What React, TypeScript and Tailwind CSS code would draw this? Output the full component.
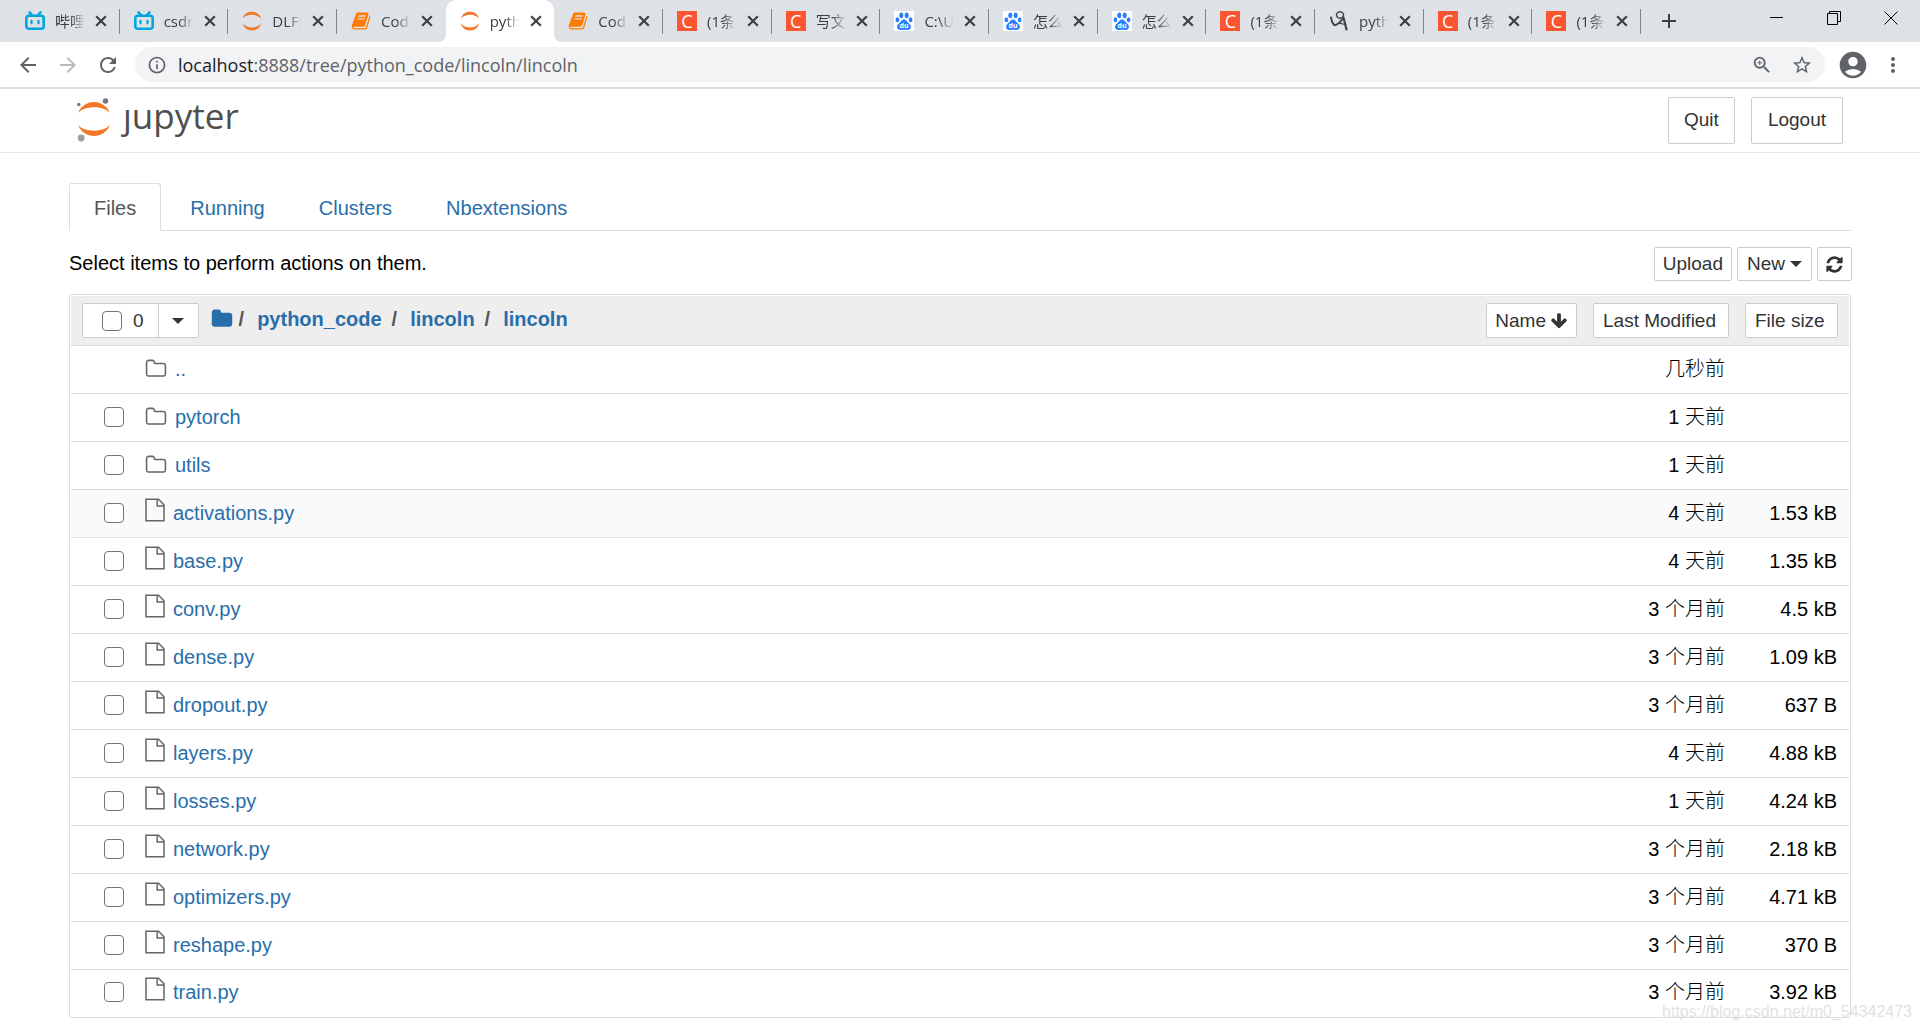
import type { ReactNode } from 'react';
import { clsx } from 'clsx';
import {
  MdAccountCircle,
  MdAdd,
  MdArrowBack,
  MdArrowForward,
  MdInfoOutline,
  MdMoreVert,
  MdRefresh,
  MdStarBorder,
  MdZoomIn,
} from 'react-icons/md';

type TabIcon = 'bili' | 'jupyter' | 'book' | 'csdn' | 'baidu' | 'scribble';

const browserTabs: { icon: TabIcon; title: string; active?: boolean }[] = [
  { icon: 'bili', title: '哔哩' },
  { icon: 'bili', title: 'csdn' },
  { icon: 'jupyter', title: 'DLFS' },
  { icon: 'book', title: 'Cod' },
  { icon: 'jupyter', title: 'pyth', active: true },
  { icon: 'book', title: 'Cod' },
  { icon: 'csdn', title: '(1条' },
  { icon: 'csdn', title: '写文' },
  { icon: 'baidu', title: 'C:\\U' },
  { icon: 'baidu', title: '怎么' },
  { icon: 'baidu', title: '怎么' },
  { icon: 'csdn', title: '(1条' },
  { icon: 'scribble', title: 'pyth' },
  { icon: 'csdn', title: '(1条' },
  { icon: 'csdn', title: '(1条' },
];

const entries: { name: string; kind: 'up' | 'folder' | 'file'; modified: string; size?: string; hovered?: boolean }[] = [
  { name: '..', kind: 'up', modified: '几秒前' },
  { name: 'pytorch', kind: 'folder', modified: '1 天前' },
  { name: 'utils', kind: 'folder', modified: '1 天前' },
  { name: 'activations.py', kind: 'file', modified: '4 天前', size: '1.53 kB', hovered: true },
  { name: 'base.py', kind: 'file', modified: '4 天前', size: '1.35 kB' },
  { name: 'conv.py', kind: 'file', modified: '3 个月前', size: '4.5 kB' },
  { name: 'dense.py', kind: 'file', modified: '3 个月前', size: '1.09 kB' },
  { name: 'dropout.py', kind: 'file', modified: '3 个月前', size: '637 B' },
  { name: 'layers.py', kind: 'file', modified: '4 天前', size: '4.88 kB' },
  { name: 'losses.py', kind: 'file', modified: '1 天前', size: '4.24 kB' },
  { name: 'network.py', kind: 'file', modified: '3 个月前', size: '2.18 kB' },
  { name: 'optimizers.py', kind: 'file', modified: '3 个月前', size: '4.71 kB' },
  { name: 'reshape.py', kind: 'file', modified: '3 个月前', size: '370 B' },
  { name: 'train.py', kind: 'file', modified: '3 个月前', size: '3.92 kB' },
];

const glyphs = {
  folder:
    'M1728 608v704q0 92-66 158t-158 66h-1216q-92 0-158-66t-66-158v-960q0-92 66-158t158-66h320q92 0 158 66t66 158v32h672q92 0 158 66t66 158z',
  folderOpen:
    'M1600 1312v-704q0-40-28-68t-68-28h-704q-40 0-68-28t-28-68v-64q0-40-28-68t-68-28h-320q-40 0-68 28t-28 68v960q0 40 28 68t68 28h1216q40 0 68-28t28-68zm128-704v704q0 92-66 158t-158 66h-1216q-92 0-158-66t-66-158v-960q0-92 66-158t158-66h320q92 0 158 66t66 158v32h672q92 0 158 66t66 158z',
  refresh:
    'M1639 1056q0 5-1 7-64 268-268 434.5t-478 166.5q-146 0-282.5-55t-243.5-157l-129 129q-19 19-45 19t-45-19-19-45v-448q0-26 19-45t45-19h448q26 0 45 19t19 45-19 45l-137 137q71 66 161 102t187 36q134 0 250-65t186-179q11-17 53-117 8-23 30-23h192q13 0 22.5 9.5t9.5 22.5zm25-800v448q0 26-19 45t-45 19h-448q-26 0-45-19t-19-45 19-45l138-138q-148-137-349-137-134 0-250 65t-186 179q-11 17-53 117-8 23-30 23h-199q-13 0-22.5-9.5t-9.5-22.5v-7q65-268 270-434.5t480-166.5q146 0 284 55.5t245 156.5l130-129q19-19 45-19t45 19 19 45z',
  arrowDown:
    'M1675 832q0 53-37 90l-651 652q-39 37-91 37-53 0-90-37l-651-652q-38-36-38-90 0-53 38-91l74-75q39-37 91-37 53 0 90 37l294 294v-704q0-52 38-90t90-38h128q52 0 90 38t38 90v704l294-294q37-37 90-37 52 0 91 37l75 75q37 39 37 91z',
  book:
    'M1703 478q40 57 18 129l-275 906q-19 64-76.5 107.5t-122.5 43.5h-923q-77 0-148.5-53.5t-99.5-131.5q-24-67-2-127 0-4 3-27t4-37q1-8-3-21.5t-3-19.5q2-11 8-21t16.5-23.5 16.5-23.5q23-38 45-91.5t30-91.5q3-10 .5-30t-.5-28q3-11 17-28t17-23q21-36 42-92t25-90q1-9-2.5-32t.5-28q4-13 22-30.5t22-22.5q19-26 42.5-84.5t27.5-96.5q1-8-3-25.5t-2-26.5q2-8 9-18t18-23 17-21q8-12 16.5-30.5t15-35 16-36 19.5-32 26.5-23.5 36-11.5 47.5 5.5l-1 3q38-9 51-9h761q74 0 114 56t18 130l-274 906q-36 119-71.5 153.5t-128.5 34.5h-869q-27 0-38 15-11 16-1 43 24 70 144 70h923q29 0 56-15.5t35-41.5l300-987q7-22 5-57 38 15 59 43zm-1064 2q-4 13 2 22.5t20 9.5h608q13 0 25.5-9.5t16.5-22.5l21-64q4-13-2-22.5t-20-9.5h-608q-13 0-25.5 9.5t-16.5 22.5zm-83 256q-4 13 2 22.5t20 9.5h608q13 0 25.5-9.5t16.5-22.5l21-64q4-13-2-22.5t-20-9.5h-608q-13 0-25.5 9.5t-16.5 22.5z',
};

function Glyph({ name, className }: { name: keyof typeof glyphs; className?: string }) {
  return (
    <svg viewBox="0 0 1792 1792" fill="currentColor" className={clsx('shrink-0', className)} aria-hidden="true">
      <path d={glyphs[name]} />
    </svg>
  );
}

function FileIcon() {
  return (
    <svg viewBox="0 0 20 24" className="h-6 w-5 shrink-0" fill="none" stroke="#666" strokeWidth="1.5" aria-hidden="true">
      <path d="M1 1.2H13.5L19 6.8V22.8H1Z" />
      <path d="M12.2 1.2V8H19" />
    </svg>
  );
}

function Caret() {
  return (
    <svg viewBox="0 0 12 6" className="h-[6px] w-3 shrink-0" fill="currentColor" aria-hidden="true">
      <path d="M0 0h12L6 6z" />
    </svg>
  );
}

function Favicon({ icon }: { icon: TabIcon }) {
  switch (icon) {
    case 'bili':
      return (
        <svg viewBox="0 0 20 20" className="size-5 shrink-0" fill="none" stroke="#00a6e0" aria-hidden="true">
          <rect x="1.3" y="4.8" width="17.4" height="13" rx="2.5" strokeWidth="2.6" />
          <path d="M4.5 1.300l3 3.200M15.500 1.300l-3 3.200" strokeWidth="2.500" strokeLinecap="round" />
          <path d="M6.500 9.800v2.500M13.500 9.800v2.500" strokeWidth="2.200" strokeLinecap="round" />
        </svg>
      );
    case 'jupyter':
      return (
        <svg viewBox="0 0 20 20" className="size-5 shrink-0" fill="#f37726" aria-hidden="true">
          <path d="M.8 7.6C2 3.2 5.5.8 10 .8s8 2.4 9.2 6.800C16.800 5 13.800 3.800 10 3.800S3.200 5 .8 7.600z" />
          <path d="M.8 12.600c1.200 4.400 4.700 6.900 9.200 6.900s8-2.500 9.200-6.900c-2.400 2.600-5.400 3.900-9.200 3.900s-6.800-1.300-9.200-3.900z" />
        </svg>
      );
    case 'book':
      return <Glyph name="book" className="size-5 text-[#ff7b00]" />;
    case 'csdn':
      return (
        <span className="grid size-5 shrink-0 place-items-center bg-[#fc5531] text-[18px] leading-5 text-white">C</span>
      );
    case 'baidu':
      return (
        <svg viewBox="0 0 20 20" className="size-5 shrink-0" aria-hidden="true">
          <path fill="#fff" d="M0 0h20v20H0z" />
          <g fill="#2a7fff">
            <ellipse cx="7.3" cy="4.3" rx="2" ry="2.9" />
            <ellipse cx="12.7" cy="4.3" rx="2" ry="2.9" />
            <ellipse cx="3.4" cy="8.7" rx="1.9" ry="2.5" />
            <ellipse cx="16.6" cy="8.7" rx="1.9" ry="2.5" />
            <path d="M10 8.4c2.3 0 3 2 4.3 3.3 1.5 1.4 3 2.6 2.6 4.8-.4 2-2 2.7-4 2.4-2-.3-3.8-.3-5.800 0s-3.600-.400-4-2.400c-.400-2.200 1.100-3.400 2.600-4.800C7 10.400 7.700 8.400 10 8.400z" />
          </g>
          <text x="10" y="17" textAnchor="middle" fontSize="7" fontWeight="700" fill="#fff">
            du
          </text>
        </svg>
      );
    case 'scribble':
      return (
        <svg viewBox="0 0 20 20" className="size-5 shrink-0" fill="none" stroke="#444" strokeLinecap="round" aria-hidden="true">
          <ellipse cx="11" cy="4" rx="3.5" ry="3.2" strokeWidth="1.5" />
          <path d="M2 6.5c.5 3 1.5 6 3.5 7.800 2.500-.300 6-3.300 8.500-7" strokeWidth="1.900" />
          <path d="M9 12.500c2-.500 4 0 6.500 1" strokeWidth="1.200" />
          <path d="M14.500 6.500c1 4 2 8 3 12" strokeWidth="2.200" />
        </svg>
      );
  }
}

function BrowserTab({ icon, title, active, divider }: { icon: TabIcon; title: string; active?: boolean; divider: boolean }) {
  return (
    <div className={clsx('relative flex h-[42px] min-w-0 flex-1 items-center pl-[14px]', active && 'rounded-t-[10px] bg-white')}>
      {active ? (
        <>
          <span className="absolute bottom-0 -left-2 size-2 bg-[radial-gradient(circle_at_0_0,transparent_8px,white_8px)]" />
          <span className="absolute -right-2 bottom-0 size-2 bg-[radial-gradient(circle_at_100%_0,transparent_8px,white_8px)]" />
        </>
      ) : null}
      <Favicon icon={icon} />
      <span className="ml-[10px] w-[30px] overflow-hidden text-[15px] leading-6 whitespace-nowrap text-[#3c4043] [mask-image:linear-gradient(to_right,black_50%,transparent)]">
        {title}
      </span>
      <button type="button" aria-label="Close tab" className="ml-[10px] text-[#3c4043]">
        <svg viewBox="0 0 12 12" className="size-3" fill="none" stroke="currentColor" strokeWidth="2.2" aria-hidden="true">
          <path d="M1.2 1.2l9.6 9.6M10.8 1.2l-9.6 9.6" />
        </svg>
      </button>
      {divider ? <span className="absolute top-[9px] right-0 h-[25px] w-px bg-[#80868b]" /> : null}
    </div>
  );
}

function TabStrip() {
  return (
    <div className="flex h-[42px] bg-[#dee1e6] pl-[11px]">
      <div className="flex min-w-0 flex-1">
        {browserTabs.map((tab, index) => (
          <BrowserTab key={index} {...tab} divider={!tab.active && !browserTabs[index + 1]?.active} />
        ))}
      </div>
      <div className="flex w-[279px] items-center justify-between pr-[22px] pl-4">
        <button type="button" aria-label="New tab" className="text-[#3c4043]">
          <MdAdd className="size-6" />
        </button>
        <div className="flex items-center gap-[43px] pb-[6px] text-black">
          <button type="button" aria-label="Minimize">
            <svg viewBox="0 0 14 14" className="size-[14px]" fill="none" stroke="currentColor" aria-hidden="true">
              <path d="M0 6.5h13" />
            </svg>
          </button>
          <button type="button" aria-label="Restore">
            <svg viewBox="0 0 14 14" className="size-[14px]" fill="none" stroke="currentColor" aria-hidden="true">
              <path d="M.5 2.5h10v11H.5zM2.5 2.5v-2h11v10h-3" />
            </svg>
          </button>
          <button type="button" aria-label="Close window">
            <svg viewBox="0 0 14 14" className="size-[14px]" fill="none" stroke="currentColor" aria-hidden="true">
              <path d="M.5.5l13 13M13.5.5l-13 13" />
            </svg>
          </button>
        </div>
      </div>
    </div>
  );
}

function AddressBar() {
  return (
    <div className="flex h-[47px] items-center border-b-2 border-[#dadce0] pr-[15px] pl-4 text-[#5f6368]">
      <div className="flex w-[119px] gap-4">
        <button type="button" aria-label="Back">
          <MdArrowBack className="size-6" />
        </button>
        <button type="button" aria-label="Forward" className="text-[#babcbe]">
          <MdArrowForward className="size-6" />
        </button>
        <button type="button" aria-label="Reload">
          <MdRefresh className="size-6" />
        </button>
      </div>
      <div className="flex h-[35px] min-w-0 flex-1 items-center rounded-full bg-[#f1f3f4] px-3">
        <MdInfoOutline className="size-5 shrink-0" />
        <p className="ml-[11px] min-w-0 flex-1 truncate text-[18px] leading-6">
          <span className="text-[#202124]">localhost</span>:8888/tree/python_code/lincoln/lincoln
        </p>
        <button type="button" aria-label="Zoom">
          <MdZoomIn className="size-[22px]" />
        </button>
        <button type="button" aria-label="Bookmark this page" className="ml-[18px]">
          <MdStarBorder className="size-[22px]" />
        </button>
      </div>
      <button type="button" aria-label="Profile" className="ml-3">
        <MdAccountCircle className="size-8" />
      </button>
      <button type="button" aria-label="Menu" className="ml-3">
        <MdMoreVert className="size-6" />
      </button>
    </div>
  );
}

function JupyterLogo() {
  return (
    <a href="#tree" aria-label="jupyter" className="flex items-start gap-3">
      <svg viewBox="0 0 34 46" className="h-[46px] w-[34px] shrink-0" aria-hidden="true">
        <path fill="#f37726" d="M1 17C4 10 10 6 17 6s13 4 16 11c-3.5-3.6-9-5.7-16-5.7S4.5 13.4 1 17z" />
        <path fill="#f37726" d="M1 29c3 7 9 11 16 11s13-4 16-11c-3.5 3.6-9 5.7-16 5.7S4.5 32.6 1 29z" />
        <circle cx="28.5" cy="5" r="2.7" fill="#767677" />
        <circle cx="1.8" cy="8.5" r="1.7" fill="#767677" />
        <circle cx="4.2" cy="42" r="3.4" fill="#9e9e9e" />
      </svg>
      <span className="font-['Open_Sans','Noto_Sans',sans-serif] text-[35px] leading-10 text-[#4e4e4e]">ȷupyter</span>
    </a>
  );
}

function Button({ children, className, label }: { children: ReactNode; className?: string; label?: string }) {
  return (
    <button
      type="button"
      aria-label={label}
      className={clsx('flex items-center rounded-xs border border-[#ccc] bg-white text-[19px] leading-6 font-normal text-[#333]', className)}
    >
      {children}
    </button>
  );
}

const checkboxClass =
  'block size-5 shrink-0 appearance-none rounded-[4px] border border-[#767676] bg-white checked:bg-[#337ab7]';

function Breadcrumb() {
  return (
    <nav aria-label="Breadcrumb" className="ml-3 flex items-center pb-1 text-[20px] leading-6 text-[#555]">
      <a href="#root" aria-label="Home" className="text-[#296eaa]">
        <Glyph name="folder" className="size-[22px]" />
      </a>
      {['python_code', 'lincoln', 'lincoln'].map((part, index) => (
        <span key={index} className="flex items-center">
          <span className={clsx('mr-[13px] font-bold', index === 0 ? 'ml-[6px]' : 'ml-[10px]')}>/</span>
          <a href="#tree" className="font-bold text-[#296eaa]">
            {part}
          </a>
        </span>
      ))}
    </nav>
  );
}

function FileTable() {
  return (
    <div className="mt-[13px] rounded-xs border border-[#ddd] p-px">
      <table className="w-full border-separate border-spacing-0 text-[20px] leading-6">
        <thead>
          <tr className="h-[50px] bg-[#eee]">
            <th className="border-b border-[#ddd] p-0 pl-[11px]">
              <div className="flex items-center">
                <div className="flex h-[35px] rounded-xs border border-[#ccc] bg-white text-[#333]">
                  <label className="flex items-center gap-[11px] pr-[14px] pl-[19px] text-[19px] font-normal">
                    <input type="checkbox" className={checkboxClass} />0
                  </label>
                  <button type="button" aria-label="Select by type" className="flex w-10 items-center justify-center border-l border-[#ccc]">
                    <Caret />
                  </button>
                </div>
                <Breadcrumb />
                <Button className="ml-auto h-[35px] gap-1 px-2">
                  Name
                  <Glyph name="arrowDown" className="size-[18px]" />
                </Button>
              </div>
            </th>
            <th className="w-[152px] border-b border-[#ddd] p-0">
              <Button className="ml-4 h-[35px] w-[136px] px-[9px]">Last Modified</Button>
            </th>
            <th className="w-[120px] border-b border-[#ddd] p-0">
              <Button className="ml-4 h-[35px] w-[93px] px-[9px]">File size</Button>
            </th>
          </tr>
        </thead>
        <tbody className="[&>tr:last-child>td]:border-b-0">
          {entries.map((entry) => (
            <tr key={entry.name} className={clsx('h-12 last:h-[46px]', entry.hovered && 'bg-[#fafafa]')}>
              <td className="border-b border-[#ddd] p-0 pb-0.5 pl-[33px]">
                <div className="flex items-center">
                  <div className="w-[41px]">
                    {entry.kind === 'up' ? null : (
                      <input type="checkbox" aria-label={entry.name} className={checkboxClass} />
                    )}
                  </div>
                  <a href={`#${entry.name}`} className="flex items-center text-[#296eaa]">
                    {entry.kind === 'file' ? (
                      <span className="pb-[6px]">
                        <FileIcon />
                      </span>
                    ) : (
                      <Glyph name="folderOpen" className="size-[22px] text-[#666]" />
                    )}
                    <span className="ml-2">{entry.name}</span>
                  </a>
                </div>
              </td>
              <td className="border-b border-[#ddd] p-0 pr-1 pb-0.5 text-right font-light text-black">{entry.modified}</td>
              <td className="border-b border-[#ddd] p-0 pr-3 pb-0.5 text-right text-black">{entry.size}</td>
            </tr>
          ))}
        </tbody>
      </table>
    </div>
  );
}

export default function App() {
  return (
    <div className="relative min-h-screen bg-white font-['Liberation_Sans','Noto_Sans_CJK_SC',sans-serif]">
      <div className="font-['Open_Sans','Noto_Sans_CJK_SC',sans-serif]">
        <TabStrip />
        <AddressBar />
      </div>

      <header className="flex h-16 justify-between border-b border-[#e7e7e7] px-[77px]">
        <div className="pt-[7px]">
          <JupyterLogo />
        </div>
        <div className="flex gap-4 pt-2">
          <Button className="h-[47px] px-[15px] pb-0.5">Quit</Button>
          <Button className="h-[47px] px-4 pb-0.5">Logout</Button>
        </div>
      </header>

      <main className="px-[69px] pt-[30px]">
        <nav className="flex gap-1 border-b border-[#ddd] text-[20px] leading-6">
          {['Files', 'Running', 'Clusters', 'Nbextensions'].map((tab, index) => (
            <a
              key={tab}
              href={`#${tab.toLowerCase()}`}
              className={clsx(
                '-mb-px h-12 rounded-t-[3px] border px-6 pt-3',
                index === 0 ? 'border-[#ddd] border-b-white bg-white text-[#555]' : 'border-transparent text-[#296eaa]',
              )}
            >
              {tab}
            </a>
          ))}
        </nav>

        <div className="mt-4 flex items-center justify-between">
          <p className="pb-0.5 text-[20px] leading-6 text-black">Select items to perform actions on them.</p>
          <div className="-mr-px flex gap-[5px]">
            <Button className="h-[34px] px-2">Upload</Button>
            <Button className="h-[34px] gap-[5px] px-[9px]">
              New
              <Caret />
            </Button>
            <Button className="h-[34px] px-[7px]" label="Refresh">
              <Glyph name="refresh" className="size-[19px]" />
            </Button>
          </div>
        </div>

        <FileTable />
      </main>

      <span className="absolute right-2 bottom-[6px] text-[16px] leading-6 text-[#d9d9d9]/80">
        https://blog.csdn.net/m0_54342473
      </span>
    </div>
  );
}
